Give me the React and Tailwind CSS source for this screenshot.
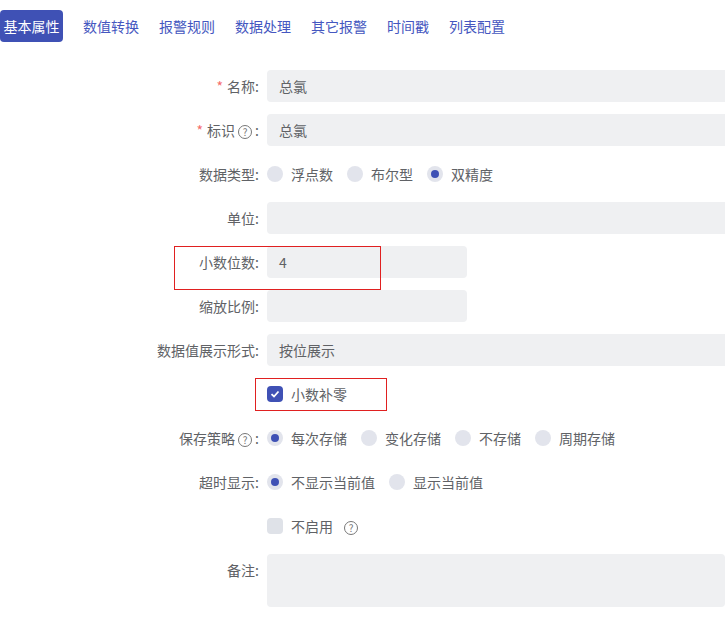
const F = { fontFamily: '"Noto Sans CJK SC","Noto Sans",sans-serif' };

function Q() {
  return <span className="inline-flex items-center justify-center w-[14px] h-[14px] rounded-full border border-[#777] text-[10px] leading-none text-[#777] mx-[3px]">?</span>;
}
function Radio({ on, label }) {
  return (
    <span className="inline-flex items-center mr-[14px]">
      <span className="w-4 h-4 rounded-full bg-[#e2e4ec] flex items-center justify-center">
        {on && <span className="w-2 h-2 rounded-full bg-[#3f51b5]" />}
      </span>
      <span className="ml-2">{label}</span>
    </span>
  );
}
function Row({ label, req, q, children, top }) {
  return (
    <div className={"flex h-[44px] " + (top ? "items-start" : "items-center")}>
      <div className={"w-[259px] text-right shrink-0 " + (top ? "pt-[8px]" : "")}>
        {req && <span className="text-[#f56c6c] mr-1">*</span>}
        {label}{q && <Q />}:
      </div>
      <div className="ml-2 flex items-center flex-1">{children}</div>
    </div>
  );
}
const inp = "h-8 rounded bg-[#eff0f2] px-3 flex items-center";

export default function App() {
  const tabs = ["数值转换", "报警规则", "数据处理", "其它报警", "时间戳", "列表配置"];
  return (
    <div className="relative w-[725px] h-[634px] overflow-hidden bg-white text-[14px] text-[#606266]" style={F}>
      <div className="flex items-center h-[32px] mt-[10px]">
        <div className="h-8 w-[63px] rounded bg-[#3f51b5] text-white flex items-center justify-center">基本属性</div>
        {tabs.map(t => <div key={t} className="ml-[20px] text-[#4557c0] first:ml-[19px]">{t}</div>)}
      </div>
      <div className="mt-[22px]">
        <Row label="名称" req><div className={inp + " w-[470px]"}>总氯</div></Row>
        <Row label="标识" req q><div className={inp + " w-[470px]"}>总氯</div></Row>
        <Row label="数据类型"><Radio label="浮点数" /><Radio label="布尔型" /><Radio on label="双精度" /></Row>
        <Row label="单位"><div className={inp + " w-[470px]"} /></Row>
        <Row label="小数位数"><div className={inp + " w-[200px]"}>4</div></Row>
        <Row label="缩放比例"><div className={inp + " w-[200px]"} /></Row>
        <Row label="数据值展示形式"><div className={inp + " w-[470px]"}>按位展示</div></Row>
        <div className="flex items-center h-[44px] pl-[267px]">
          <span className="w-4 h-4 rounded-sm bg-[#3f51b5] flex items-center justify-center">
            <svg width="10" height="10" viewBox="0 0 10 10"><path d="M1.5 5.2 L4 7.5 L8.5 2.5" stroke="white" strokeWidth="1.8" fill="none" /></svg>
          </span>
          <span className="ml-2">小数补零</span>
        </div>
        <Row label="保存策略" q><Radio on label="每次存储" /><Radio label="变化存储" /><Radio label="不存储" /><Radio label="周期存储" /></Row>
        <Row label="超时显示"><Radio on label="不显示当前值" /><Radio label="显示当前值" /></Row>
        <div className="flex items-center h-[44px] pl-[267px]">
          <span className="w-4 h-4 rounded-sm bg-[#dfe2e8]" />
          <span className="ml-2">不启用</span><span className="ml-2"><Q /></span>
        </div>
        <div className="flex mt-[6px]">
          <div className="w-[259px] text-right shrink-0 pt-[6px]">备注:</div>
          <div className="ml-2 h-[53px] w-[470px] rounded bg-[#eff0f2]" />
        </div>
      </div>
      <div className="absolute left-[174px] top-[246px] w-[207px] h-[44px] border border-[#e02020]" />
      <div className="absolute left-[255px] top-[378px] w-[132px] h-[33px] border border-[#e02020]" />
    </div>
  );
}
